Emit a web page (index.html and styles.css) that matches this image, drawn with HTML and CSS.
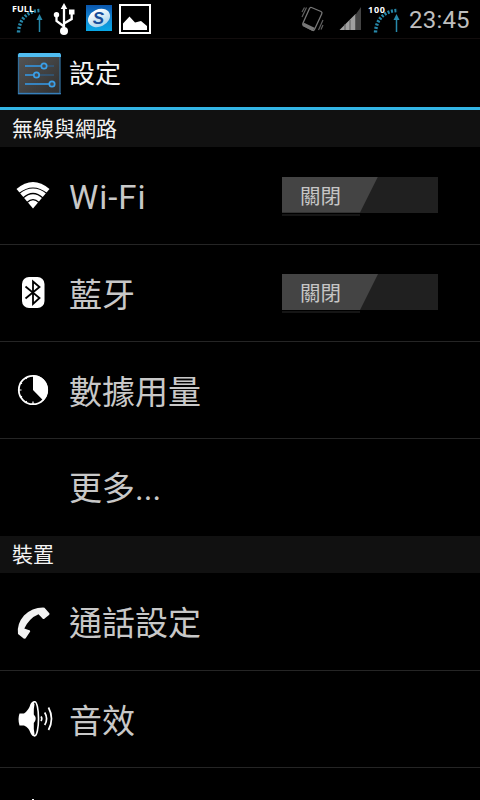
FILE: index.html
```html
<!DOCTYPE html>
<html lang="zh-Hant">
<head>
<meta charset="utf-8">
<title>設定</title>
<link rel="stylesheet" href="styles.css">
</head>
<body>
<div class="screen">
  <div class="status">
    <svg class="gauge-full" width="34" height="38" viewBox="10 0 34 38">
      <path d="M18.500 32.500C19 20 27 10.500 41 10.500" fill="none" stroke="#2789ab" stroke-width="3.400" stroke-dasharray="2 1.500"/>
      <path d="M39.500 32V17" stroke="#2789ab" stroke-width="1.500"/><path d="M36.500 20L39.500 14L42.500 20Z" fill="#2789ab"/>
      <text x="12" y="12" class="tiny" textLength="22">FULL</text>
    </svg>
    <svg class="usb" width="24" height="38" viewBox="52 0 24 38">
      <g fill="none" stroke="#fff" stroke-width="2.300"><path d="M64 30V7M64 26.500L56.500 21V15M64 23.500L71.700 19V13"/></g>
      <path d="M60.700 9L64 3L67.300 9ZM69 9.500H74.500V14.500H69Z" fill="#fff"/><circle cx="64" cy="31" r="4" fill="#fff"/><circle cx="56.500" cy="14.700" r="2.700" fill="#fff"/>
    </svg>
    <svg class="sync" width="27" height="38" viewBox="86 0 27 38">
      <defs><linearGradient id="blue" x1="0" y1="0" x2="0" y2="1"><stop offset="0" stop-color="#0a56ad"/><stop offset=".5" stop-color="#1385d1"/><stop offset="1" stop-color="#08a8e6"/></linearGradient>
      <linearGradient id="pearl" x1="0" y1="0" x2="0" y2="1"><stop offset="0" stop-color="#fff"/><stop offset="1" stop-color="#a9d4ec"/></linearGradient></defs>
      <path d="M86 5H112V31H86Z" fill="url(#blue)"/><ellipse cx="99" cy="18" rx="11.500" ry="8.500" transform="rotate(-25 99 18)" fill="url(#pearl)"/>
      <text x="98.500" y="24" class="sync-letter" text-anchor="middle">S</text>
    </svg>
    <svg class="photo" width="32" height="38" viewBox="119 0 32 38"><path d="M120 5H150V33H120Z" fill="none" stroke="#fff" stroke-width="2"/><path d="M123 30V23.500L129.500 16.500L135 22.500L141 21L147 26V30Z" fill="#fff"/></svg>
    <svg class="vibrate" width="24" height="38" viewBox="301 0 24 38">
      <path d="M311.500 7.500L321 11.500Q322.500 12.300 321.800 13.800L314.500 29.500Q313.800 31 312.500 30.300L303.500 25.500Q302.300 24.800 302.800 23.500L309.500 8.500Q310.200 7 311.500 7.500Z" fill="none" stroke="#777" stroke-width="1.300"/><path d="M302 17L306.500 7.500M302 12L304.500 7.500M318.500 30L323 20M321 29.500L323 25" stroke="#606060" stroke-width="1.200"/><path d="M303.500 22.500L315 28L312.500 31L302.500 26Z" fill="#777"/>
    </svg>
    <svg class="signal" width="22" height="38" viewBox="339 0 22 38"><path d="M339.500 30L355 14.500V30Z" fill="#a0a0a0"/><path d="M356 14L361 7V30H356Z" fill="#444"/><path d="M345 24V30M350 20V30M355.500 14V30" stroke="#595959"/></svg>
    <svg class="gauge-hundred" width="34" height="38" viewBox="367 0 34 38">
      <path d="M375.500 32.500C376 20 384 10.500 398 10.500" fill="none" stroke="#2789ab" stroke-width="3.400" stroke-dasharray="2 1.500"/>
      <path d="M396.500 32V17" stroke="#2789ab" stroke-width="1.500"/><path d="M393.500 20L396.500 14L399.500 20Z" fill="#2789ab"/>
      <text x="368" y="13" class="tiny" textLength="17">100</text>
    </svg>
    <span class="clock">23:45</span>
  </div>
  <div class="bar">
    <svg class="app-icon" width="44" height="42" viewBox="0 0 44 42">
      <defs><linearGradient id="slate" x1="0" y1="0" x2="1" y2="1"><stop offset="0" stop-color="#555"/><stop offset="1" stop-color="#303030"/></linearGradient></defs>
      <path d="M1.500 1.500H43V40.500H1.500Z" fill="url(#slate)" stroke="#326d9a" stroke-width="1.300"/><path d="M1 2L2 0H43L44 2V4H1Z" fill="#50bdf1"/><path d="M1 40.700H44" stroke="#3984c2"/>
      <path d="M8 13H37M8 22H37M8 31H37" stroke="#315a7d" stroke-width="1.300"/><path d="M8 13H24M8 22H17M8 31H33" stroke="#3995dc" stroke-width="1.500"/>
      <g fill="#454a50" stroke="#3aa0e9" stroke-width="1.700"><circle cx="27" cy="13" r="2.700"/><circle cx="19.500" cy="22" r="2.700"/><circle cx="35" cy="31" r="2.700"/></g>
    </svg>
    <h1>設定</h1>
  </div>
  <h2>無線與網路</h2>
  <ul>
    <li>
      <svg width="34" height="34" viewBox="0 0 34 34"><path d="M.5 10Q17-4 33.500 10L17 29.500Z" fill="#fff"/><path d="M3 14.500Q17 3.500 31 14.500M7 19Q17 10 27 19M11 23.500Q17 17.500 23 23.500" fill="none" stroke="#000" stroke-width="1.200"/></svg>
      <span class="label latin">Wi-Fi</span>
      <span class="switch"><span class="thumb">關閉</span></span>
    </li>
    <li>
      <svg width="34" height="34" viewBox="0 0 34 34"><rect x="6" y="1" width="22.500" height="31" rx="7" fill="#fff"/><path d="M9.500 10.500L23.500 22L17 28V5.500L23.500 11L9.500 22.500" fill="none" stroke="#000" stroke-width="1.800"/></svg>
      <span class="label">藍牙</span>
      <span class="switch"><span class="thumb">關閉</span></span>
    </li>
    <li>
      <svg width="34" height="34" viewBox="0 0 34 34"><circle cx="17" cy="17" r="14.200" fill="none" stroke="#fff" stroke-width="1.800"/><path d="M17 17V2A15 15 0 0 1 27.500 27.700Z" fill="#fff"/><path d="M2 17H5.500M17 32V28.500M4 9.500L6 10.700M4 24.500L6 23.300M9.500 4L10.700 6M9.500 30L10.700 28" stroke="#fff" stroke-width="1.200"/></svg>
      <span class="label">數據用量</span>
    </li>
    <li><span class="blank"></span><span class="label">更多...</span></li>
  </ul>
  <h2>裝置</h2>
  <ul>
    <li>
      <svg width="34" height="34" viewBox="0 0 34 34"><path d="M27 2.500L28.500 2.700L33.500 8.500L33.300 9.700L28 14L27 14L22.500 9.300Q13.500 13 8.300 23.500L14 25.500L14.200 26.500L9.500 33.500L8 33.700L2 29Q.5 19 8 10.500Q16 2.500 27 2.500Z" fill="#f2f2f2"/></svg>
      <span class="label">通話設定</span>
    </li>
    <li>
      <svg class="speaker" width="37" height="38" viewBox="0 0 37 38"><path d="M3.500 13.500H8Q13 10 14.500 4Q16 1 19 1V36.500Q16 36.500 14.500 33Q13 27.500 8 25.500H3.500Q1.500 19 3.500 13.500Z" fill="#fff"/><ellipse cx="18.800" cy="18.700" rx="3.700" ry="17" fill="#000" stroke="#fff" stroke-width="1.600"/><path d="M17.500 2.500L18.500 4Q17.500 9 17.800 14.500Q21.500 18.500 17.800 23Q17.500 28.500 18.500 34L17.500 35Q12 18.700 17.500 2.500Z" fill="#fff"/><path d="M25 16.500Q26.500 18.700 25 21M28.700 12.500Q32.500 18.700 28.700 25M32.500 7.500Q38.500 18.700 32.500 30" fill="none" stroke="#fff" stroke-width="1.700"/></svg>
      <span class="label">音效</span>
    </li>
    <li class="next"><svg width="34" height="34" viewBox="0 0 34 34"><path d="M17 0V9M2 17H32M6 6L28 28M28 6L6 28M17 25V34" stroke="#fff" stroke-width="2"/><circle cx="17" cy="17" r="9" fill="#fff"/></svg></li>
  </ul>
</div>
</body>
</html>
```
FILE: styles.css
```css
* { box-sizing: border-box; }
body { margin: 0; background: #000; font-family: Roboto, "Noto Sans CJK TC", sans-serif; }
.screen { width: 480px; height: 800px; overflow: hidden; background: #000; color: #f3f3f3; }
svg { display: block; flex: none; }
.status { display: flex; height: 39px; padding-left: 10px; border-bottom: 1px solid #120d0d; }
.usb { margin-left: 8px; }
.sync { margin-left: 10px; }
.photo { margin-left: 6px; }
.vibrate { margin-left: 150px; }
.signal { margin-left: 14px; }
.gauge-hundred { margin-left: 6px; }
.tiny { font: 700 9px "Open Sans", sans-serif; fill: #fff; }
.sync-letter { font: italic 700 17px "Liberation Sans", sans-serif; fill: #174e99; }
.clock { margin-left: 8px; font-size: 24px; line-height: 41px; color: #bebebe; letter-spacing: .2px; }
.bar { display: flex; height: 71px; padding: 14px 0 0 17px; border-bottom: 3px solid #33b5e5; }
h1 { margin: 0 0 0 8px; font-size: 26px; line-height: 43px; font-weight: 400; }
h2 { margin: 0; height: 37px; padding-left: 12px; background: #111; font-size: 21px; line-height: 38px; font-weight: 400; }
ul { margin: 0; padding: 0; list-style: none; }
li { display: flex; align-items: center; height: 97px; padding: 0 42px 0 16px; border-bottom: 1px solid #252525; }
li:first-child { height: 98px; }
li:last-child { border-bottom: 0; }
.blank { width: 34px; }
.label { margin-left: 19px; padding-top: 5px; font-size: 33px; line-height: 48px; color: #c8c8c8; }
.blank + .label { padding-top: 3px; }
.latin { letter-spacing: .95px; }
.speaker + .label { margin-left: 16px; }
.switch { width: 156px; height: 36px; margin-left: auto; background: #202020; position: relative; top: -1px; }
.switch::after { content: ""; position: absolute; left: 0; top: 37px; width: 78px; height: 2px; background: #151515; }
.thumb { display: block; width: 96px; height: 36px; padding-left: 18px; background: #444; clip-path: polygon(0 0, 100% 0, 78px 100%, 0 100%); font-size: 20.5px; line-height: 40px; color: #c6c6c6; }
.next { align-items: flex-start; padding-top: 31px; }
```
